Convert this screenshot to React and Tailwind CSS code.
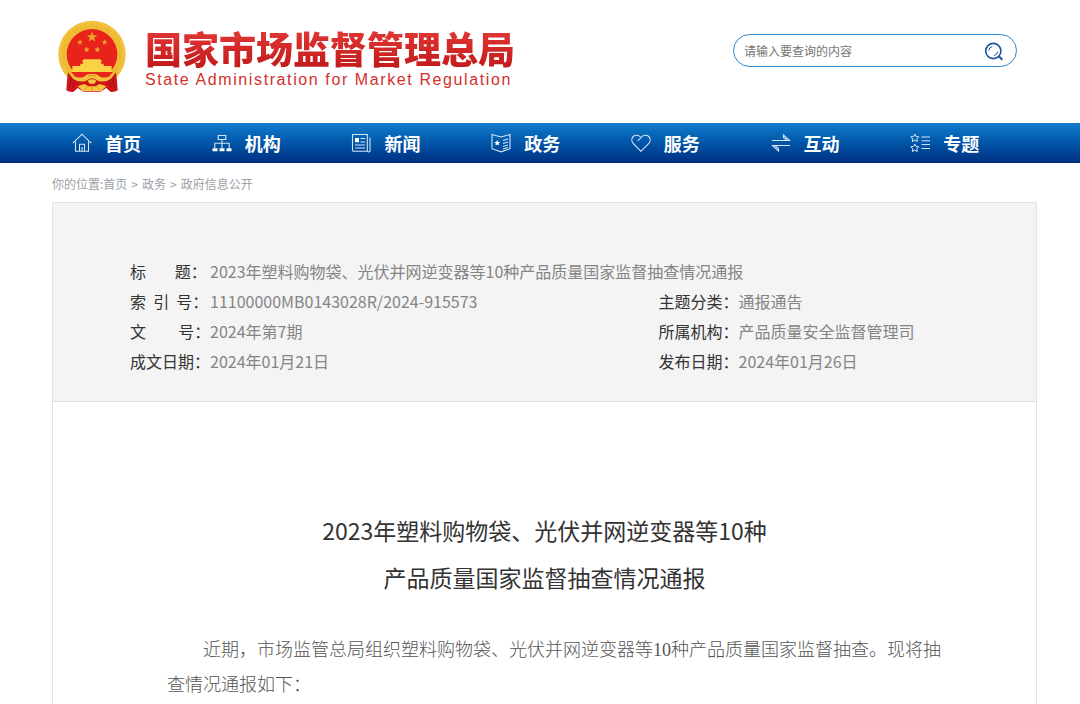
import React from 'react';

const iconProps = {
  viewBox: '0 0 20 20',
  fill: 'none',
  stroke: 'currentColor',
  strokeWidth: 1.1,
  className: 'w-5 h-5 shrink-0 text-[#d5e6f7]',
  'aria-hidden': true,
};

const HomeIcon = () => (
  <svg {...iconProps}>
    <path d="M0.8 10.2 10 1.2l9.2 9" />
    <path d="M3.5 8.5v9.8h13V8.5M7.5 18v-6.8h5V18M10 14v4" />
  </svg>
);

const OrgIcon = () => (
  <svg {...iconProps}>
    <path d="M6.2 2.5h7.6v4H6.2zM10 6.5v3.7M2.8 15v-4.8h14.4V15M10 10.2V15" />
    <path d="M0.5 15.2h5v3h-5zM7.5 15.2h5v3h-5zM14.5 15.2h5v3h-5z" fill="white" stroke="none" />
  </svg>
);

const NewsIcon = () => (
  <svg {...iconProps}>
    <path d="M1.5 1.5h14.8v16.8H2.8a1.3 1.3 0 0 1-1.3-1.3zM19 4.5v12.3a1.5 1.5 0 0 1-2.7 1.3" />
    <path d="M9.5 5.5h4.5M9.5 9h4.5M4 12h10M4 15h10" />
    <path d="M4 5h4v4.3H4z" fill="white" stroke="none" />
  </svg>
);

const BookIcon = () => (
  <svg {...iconProps}>
    <path d="M1 1.5 10 4l9-2.5v14.2L10 18.8 1 15.7z" />
    <path d="m12 7.500 5-1.600M12 10.500l5-1.600M12 13.500l5-1.600M12 16l5-1.600" />
    <path d="m6.200 7 .9 1.900 2 .2-1.500 1.400.4 2.100-1.800-1.100-1.800 1.100.4-2.100-1.500-1.400 2-.2z" fill="white" stroke="none" />
  </svg>
);

const HeartIcon = () => (
  <svg {...iconProps}>
    <path d="M10 18.300 2.400 10.600C.3 8.300.4 5.300 2.200 3.500 4.300 1.600 7.700 1.900 10 4.500c2.300-2.600 5.700-2.900 7.800-1 1.800 1.800 1.900 4.800-.2 7.100z" />
    <path d="M10 4.500 6.800 8" />
  </svg>
);

const SwapIcon = () => (
  <svg {...iconProps}>
    <path d="M1 7.500h17.500L12.500 2v2.500l3.500 3M19 12.500H1.500l6 5.500v-2.500l-3.500-3" />
  </svg>
);

const TopicIcon = () => (
  <svg {...iconProps} strokeWidth="1">
    <path d="m4.800 1 1.200 2.500 2.800.3-2 2 .5 2.700-2.500-1.300-2.500 1.300.5-2.700-2-2 2.800-.3z" />
    <path d="m4.800 11 1.200 2.500 2.800.3-2 2 .5 2.700-2.500-1.300-2.500 1.300.5-2.700-2-2 2.800-.3z" />
    <path d="M11.500 4h8.500M11.500 7.800h8.500M11.500 11.600h8.500M11.500 15.500h8.500" />
  </svg>
);

const STAR = 'M0-10 2.400-3.200 9.500-3.100 3.800 1.200 5.900 8.100 0 4-5.900 8.100-3.800 1.200-9.500-3.100-2.400-3.200z';

const Emblem = () => (
  <svg viewBox="20 30 210 222" className="w-[70px] h-[74px] shrink-0" role="img" aria-label="国徽">
    <circle cx="125" cy="133" r="101" fill="#efbd35" />
    <circle cx="125" cy="133" r="96" fill="none" stroke="#f3c840" strokeWidth="4" strokeDasharray="9 4" />
    <circle cx="125" cy="133" r="84" fill="none" stroke="#e9b230" strokeWidth="3" strokeDasharray="7 5" />
    <circle cx="125" cy="133" r="76" fill="#e9231b" />
    <g fill="#e8a52c">
      <path d={STAR} transform="translate(125 81) scale(1.7)" />
      <path d={STAR} transform="translate(89 97) scale(.95)" />
      <path d={STAR} transform="translate(163 97) scale(.95)" />
      <path d={STAR} transform="translate(109 119)" />
      <path d={STAR} transform="translate(141 119)" />
    </g>
    <path d="M100 148h50l6 7H94zM98 155h54v6H98zM91 161h68l2 7H89zM66 168h118v18H66z" fill="#fad345" />
    <path d="M62 186h126l-14 14H76z" fill="#e9231b" />
    {/* ribbon */}
    <path d="M53 187c8 12 26 14 46 13h52c20 1 38-1 46-13 3 20 4 38 5 54-8 5-15 6-22 4l-12-11-18 11h-50l-18-11-12 11c-7 2-14 1-22-4 1-16 2-34 5-54z" fill="#cf171b" />
    <path d="M62 199c2 14-3 28-7 37M188 199c-2 14 3 28 7 37M76 204l-8 28M174 204l8 28" stroke="#a01015" strokeWidth="3" fill="none" />
    {/* gear and wheat stems */}
    <path d="M58 190c14 14 34 16 46 8 8-9 34-9 42 0 12 8 32 6 46-8-6 20-28 30-50 22-8-3-10-7-17-7s-9 4-17 7c-22 8-44-2-50-22z" fill="#f3c13a" />
    <path d="M112 213c6-7 20-7 26 0l-6 8h-14zM82 229l20-7 12 7h22l12-7 20 7-16 14h-54z" fill="#f5c83e" />
    <path d="M112 200c8-5 18-5 26 0M104 238l8-8M146 238l-8-8M125 230v12" stroke="#d98a22" strokeWidth="2.5" fill="none" />
  </svg>
);

const SearchIcon = () => (
  <svg viewBox="0 0 20 20" fill="none" stroke="#1f539f" className="w-5 h-5" aria-hidden="true">
    <circle cx="9.3" cy="10" r="7.6" strokeWidth="1.6" />
    <path d="m14.500 15 3.800 3.800" strokeWidth="2" />
    <path d="M4.800 9.700A4.600 4.600 0 0 1 8.300 5.500M13.800 10.500a4.600 4.600 0 0 1-3.800 4" strokeWidth="1" />
  </svg>
);

const navItems = [
  { label: '首页', Icon: HomeIcon },
  { label: '机构', Icon: OrgIcon },
  { label: '新闻', Icon: NewsIcon },
  { label: '政务', Icon: BookIcon },
  { label: '服务', Icon: HeartIcon },
  { label: '互动', Icon: SwapIcon },
  { label: '专题', Icon: TopicIcon },
];

const meta = [
  { label: '索  引  号', value: '11100000MB0143028R/2024-915573' },
  { label: '主题分类', value: '通报通告' },
  { label: '文         号', value: '2024年第7期' },
  { label: '所属机构', value: '产品质量安全监督管理司' },
  { label: '成文日期', value: '2024年01月21日' },
  { label: '发布日期', value: '2024年01月26日' },
];

const MetaItem = ({ label, value, className = '' }) => (
  <div className={`flex ${className}`}>
    <dt className="w-20 shrink-0 whitespace-pre text-[#333]">{label}：</dt>
    <dd className="whitespace-nowrap text-[#858585]">{value}</dd>
  </div>
);

const Header = () => (
  <header className="flex items-start justify-between pt-5 pl-[57px] pr-[63px] h-[123px]">
    <a href="#" className="flex items-start gap-[18px]">
      <Emblem />
      <div className="pt-1">
        <div className="text-[37px] leading-[48px] font-black whitespace-nowrap text-transparent bg-clip-text bg-linear-to-b from-[#e63a38] to-[#bf1618]">
          国家市场监督管理总局
        </div>
        <div className="font-['Liberation_Sans'] text-base leading-4 tracking-widest whitespace-nowrap text-[#d2302c]">
          State Administration for Market Regulation
        </div>
      </div>
    </a>
    <form className="mt-[14px] flex items-center w-[284px] h-[33px] pl-[10px] pr-3 border border-[#2a86cf] rounded-full">
      <input
        type="text"
        aria-label="搜索"
        placeholder="请输入要查询的内容"
        className="flex-1 min-w-0 text-xs outline-none placeholder:text-[#757575]"
      />
      <button type="submit" aria-label="查询">
        <SearchIcon />
      </button>
    </form>
  </header>
);

const Nav = () => (
  <nav className="h-10 pl-[52px] pr-[50px] bg-linear-to-b from-[#127ccd] to-[#002f82]">
    <ul className="grid grid-cols-7 h-full">
      {navItems.map(({ label, Icon }) => (
        <li key={label}>
          <a href="#" className="flex items-center h-full pl-5 gap-[13px] text-lg font-bold text-white">
            <Icon />
            {label}
          </a>
        </li>
      ))}
    </ul>
  </nav>
);

const App = () => {
  return (
    <div className="min-h-screen flex flex-col bg-white font-['Noto_Sans_CJK_SC',sans-serif]">
      <Header />
      <Nav />
      <main className="flex-1 flex flex-col pl-[52px] pr-[43px]">
        <div className="flex gap-1 h-[39px] pt-3 text-xs leading-[18px] text-[#9a9fa8]">
          <span>你的位置:<a href="#">首页</a></span>
          <span>&gt;</span>
          <a href="#">政务</a>
          <span>&gt;</span>
          <a href="#">政府信息公开</a>
        </div>
        <article className="flex-1 border border-b-0 border-[#dde2ee]">
          <dl className="grid grid-cols-[7fr_5fr] pt-[53px] pb-[25px] pl-[77px] bg-[#f4f4f4] border-b border-[#dcdee3] text-base leading-[30px]">
            <MetaItem
              label="标        题"
              value="2023年塑料购物袋、光伏并网逆变器等10种产品质量国家监督抽查情况通报"
              className="col-span-2"
            />
            {meta.map((item) => (
              <MetaItem key={item.label} {...item} />
            ))}
          </dl>
          <div className="pt-[105px] pl-[114px] pr-[84px]">
            <h1 className="pr-[30px] text-center text-[23px] leading-[47px] text-[#333]">
              2023年塑料购物袋、光伏并网逆变器等10种
              <br />
              产品质量国家监督抽查情况通报
            </h1>
            <p className="mt-8 indent-[2em] text-lg leading-[35px] font-light text-[#555] font-['Liberation_Serif','Noto_Sans_CJK_SC',serif]">
              近期，市场监管总局组织塑料购物袋、光伏并网逆变器等10种产品质量国家监督抽查。现将抽查情况通报如下：
            </p>
          </div>
        </article>
      </main>
    </div>
  );
};

export default App;
